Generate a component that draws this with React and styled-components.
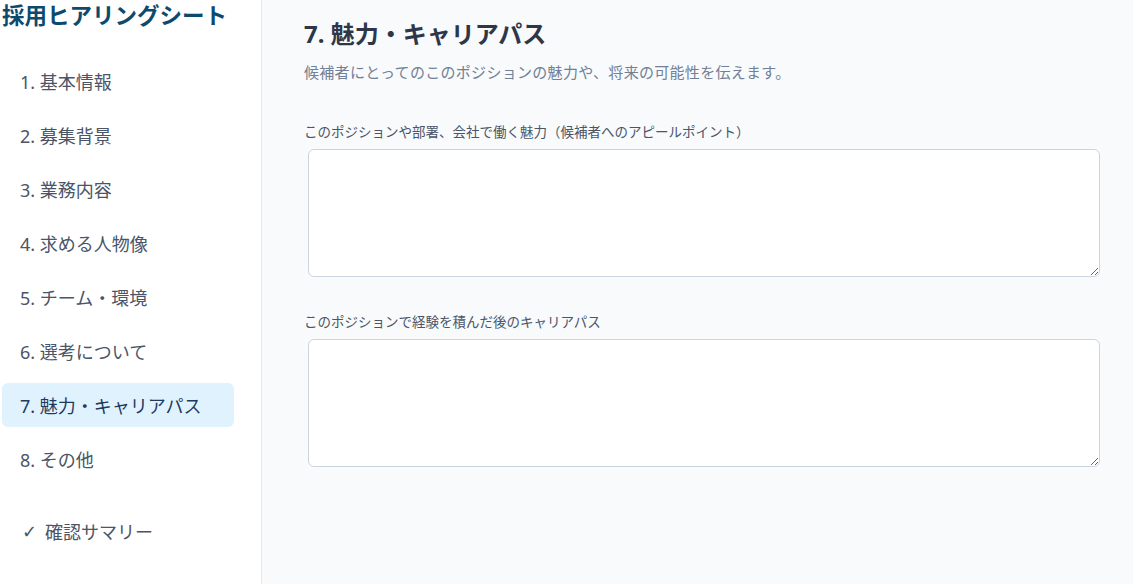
import React from "react";
import styled, { createGlobalStyle } from "styled-components";

const GlobalStyle = createGlobalStyle`
  html, body {
    margin: 0;
    padding: 0;
    height: 100%;
    background: #f8fafc;
    font-family: "Noto Sans", "Noto Sans CJK JP", sans-serif;
  }
  #root {
    height: 100%;
  }
`;

const Layout = styled.div`
  display: flex;
  height: 584px;
  overflow: hidden;
`;

const Sidebar = styled.aside`
  width: 262px;
  flex-shrink: 0;
  background: #ffffff;
  border-right: 1px solid #e2e8f0;
  padding: 0 27px 0 2px;
  box-sizing: border-box;
  display: flex;
  flex-direction: column;
`;

const BrandTitle = styled.h1`
  margin: 0 0 29px;
  padding-top: 1px;
  font-size: 22.5px;
  line-height: 29px;
  font-weight: 700;
  color: #0c4a6e;
  white-space: nowrap;
`;

const NavList = styled.nav`
  display: flex;
  flex-direction: column;
  gap: 10px;
`;

const NavItem = styled.a`
  display: flex;
  align-items: center;
  height: 44px;
  padding-left: 18px;
  border-radius: 6px;
  font-size: 18px;
  color: ${({ $active }) => ($active ? "#1e3a5f" : "#4a5568")};
  background: ${({ $active }) => ($active ? "#e0f2fe" : "transparent")};
  text-decoration: none;
  cursor: pointer;
`;

const SummaryItem = styled(NavItem)`
  margin-top: 18px;
`;

const Check = styled.span`
  font-family: "DejaVu Sans", sans-serif;
  font-size: 18px;
  font-weight: 300;
  margin: 0 8px 0 2px;
`;

const Main = styled.main`
  flex: 1;
  padding: 14px 33px 0 42px;
`;

const Heading = styled.h2`
  margin: 0;
  font-size: 24px;
  line-height: 40px;
  font-weight: 700;
  color: #2d3748;
`;

const Lead = styled.p`
  margin: 5px 0 0;
  font-size: 15px;
  line-height: 26px;
  letter-spacing: 0.3px;
  color: #718096;
`;

const Fields = styled.div`
  margin-top: 37px;
  display: flex;
  flex-direction: column;
  gap: 35px;
`;

const Field = styled.label`
  display: flex;
  flex-direction: column;
  gap: 7px;
`;

const FieldLabel = styled.span`
  font-size: 13.5px;
  line-height: 20px;
  color: #4a5568;
`;

const TextArea = styled.textarea`
  height: 128px;
  margin-left: 4px;
  box-sizing: border-box;
  border: 1px solid #cbd5e0;
  border-radius: 6px;
  background: #ffffff;
  padding: 10px 12px;
  font: inherit;
  font-size: 14px;
  color: #2d3748;
  resize: vertical;
  outline: none;
`;

const sections = [
  "1. 基本情報",
  "2. 募集背景",
  "3. 業務内容",
  "4. 求める人物像",
  "5. チーム・環境",
  "6. 選考について",
  "7. 魅力・キャリアパス",
  "8. その他",
];

export default function App() {
  return (
    <>
      <GlobalStyle />
      <Layout>
        <Sidebar>
          <BrandTitle>採用ヒアリングシート</BrandTitle>
          <NavList>
            {sections.map((s, i) => (
              <NavItem key={s} $active={i === 6}>
                {s}
              </NavItem>
            ))}
            <SummaryItem>
              <Check>✓</Check>確認サマリー
            </SummaryItem>
          </NavList>
        </Sidebar>
        <Main>
          <Heading>7. 魅力・キャリアパス</Heading>
          <Lead>候補者にとってのこのポジションの魅力や、将来の可能性を伝えます。</Lead>
          <Fields>
            <Field>
              <FieldLabel>このポジションや部署、会社で働く魅力（候補者へのアピールポイント）</FieldLabel>
              <TextArea />
            </Field>
            <Field>
              <FieldLabel>このポジションで経験を積んだ後のキャリアパス</FieldLabel>
              <TextArea />
            </Field>
          </Fields>
        </Main>
      </Layout>
    </>
  );
}
